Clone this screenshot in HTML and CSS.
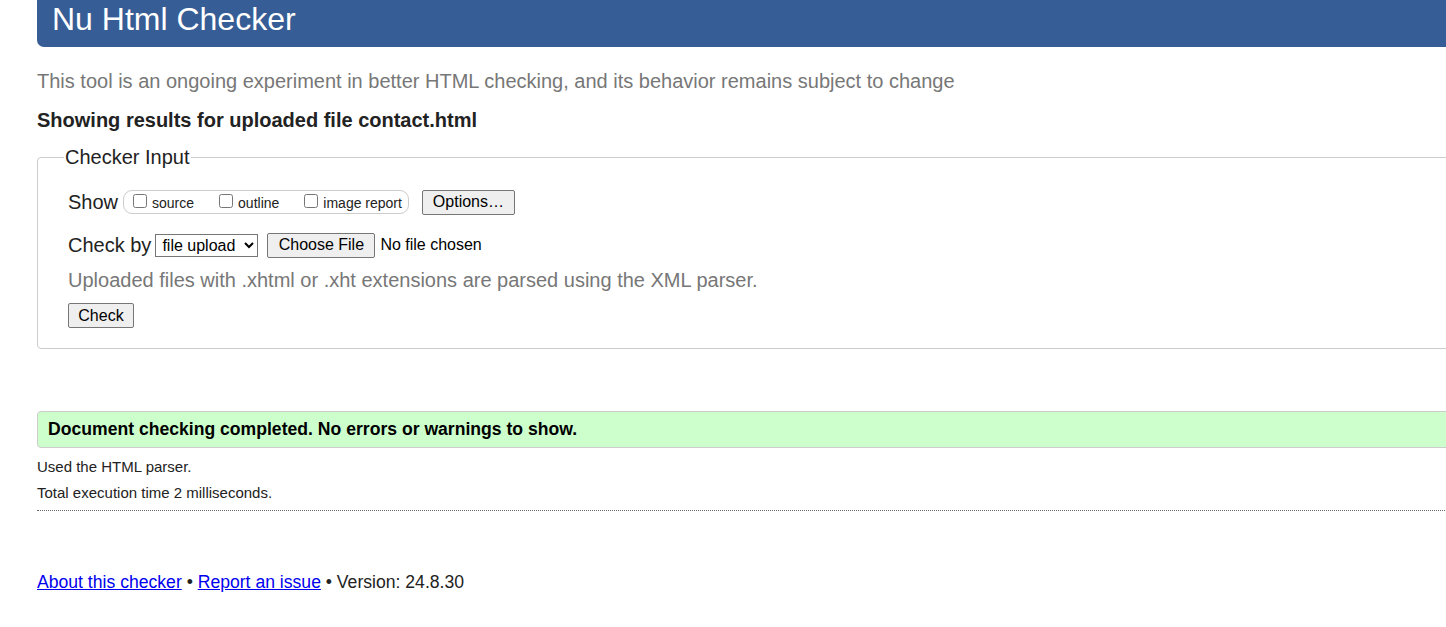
FILE: index.html
```html
<!DOCTYPE html>
<html lang="en">
<head>
<meta charset="utf-8">
<title>Showing results for contact.html - Nu Html Checker</title>
<link rel="stylesheet" href="styles.css">
</head>
<body>
<div class="page">
  <header class="masthead"><h1>Nu Html Checker</h1></header>
  <p class="intro">This tool is an ongoing experiment in better HTML checking, and its behavior remains subject to change</p>
  <p class="results-for">Showing results for uploaded file contact.html</p>
  <form class="checker-form">
    <fieldset class="checker-input">
      <legend>Checker Input</legend>
      <div class="row row-show">
        <span class="label">Show</span>
        <span class="show-group">
          <label class="opt"><input type="checkbox"><span>source</span></label>
          <label class="opt"><input type="checkbox"><span>outline</span></label>
          <label class="opt"><input type="checkbox"><span>image report</span></label>
        </span>
        <button type="button" class="btn btn-options">Options…</button>
      </div>
      <div class="row row-check">
        <span class="label">Check by</span>
        <select class="docselect"><option>file upload</option></select>
        <span class="file-pick">
          <button type="button" class="btn btn-file">Choose File</button>
          <span class="nofile">No file chosen</span>
        </span>
      </div>
      <p class="hint">Uploaded files with .xhtml or .xht extensions are parsed using the XML parser.</p>
      <div class="row row-submit">
        <button type="button" class="btn btn-check">Check</button>
      </div>
    </fieldset>
  </form>
  <div class="success">Document checking completed. No errors or warnings to show.</div>
  <p class="details">Used the HTML parser.</p>
  <p class="details">Total execution time 2 milliseconds.</p>
  <hr class="sep">
  <p class="footer"><a href="#">About this checker</a> • <a href="#">Report an issue</a> • Version: 24.8.30</p>
</div>
</body>
</html>
```
FILE: styles.css
```css
html, body {
  margin: 0;
  padding: 0;
  overflow: hidden;
  background: #fff;
}
body {
  font-family: "Liberation Sans", Arial, sans-serif;
  color: #222;
}
.page {
  width: 1440px;
  padding-left: 37px;
}
.masthead {
  background: #365d95;
  height: 47px;
  border-bottom-left-radius: 7px;
  margin-right: -40px;
}
.masthead h1 {
  margin: 0;
  padding: 1px 0 0 15px;
  font-size: 32px;
  font-weight: normal;
  line-height: 36px;
  color: #fff;
}
.intro {
  margin: 22px 0 0;
  font-size: 20px;
  line-height: 24px;
  color: #777;
}
.results-for {
  margin: 15px 0 0;
  font-size: 20px;
  line-height: 24px;
  font-weight: bold;
  color: #222;
}
.checker-form {
  margin: 13px 0 0;
}
.checker-input {
  margin: 0 -40px 0 0;
  padding: 20px 30px 20px 30px;
  border: 1px solid #ccc;
  border-radius: 4px;
  display: flex;
  flex-direction: column;
}
.checker-input legend {
  font-size: 20px;
  line-height: 24px;
  padding: 0 1px;
  margin-left: -4px;
  color: #222;
}
.row {
  display: flex;
  align-items: center;
}
.label {
  font-size: 20px;
  line-height: 24px;
}
.row-show {
  height: 26px;
}
.row-check {
  margin-top: 17px;
  height: 26px;
}
.show-group {
  margin-left: 5px;
  height: 22px;
  padding: 0 6px 0 9px;
  border: 1px solid #ccc;
  border-radius: 9px;
  display: flex;
  align-items: center;
  gap: 25px;
}
.opt {
  font-size: 14px;
  display: flex;
  align-items: center;
  position: relative;
  top: 1px;
}
.opt input {
  margin: 0 5px 4px 0;
  width: 14px;
  height: 14px;
}
.btn {
  font-family: "Liberation Sans", Arial, sans-serif;
  font-size: 16px;
  color: #000;
  background: #efefef;
  border: 1px solid #767676;
  border-radius: 2px;
  padding: 0 8px;
  height: 25px;
}
.btn-options {
  margin-left: 13px;
  width: 93px;
}
.docselect {
  margin-left: 4px;
  font-family: "Liberation Sans", Arial, sans-serif;
  font-size: 16px;
  height: 23px;
  width: 103px;
  color: #000;
  border: 1px solid #767676;
  border-radius: 0;
  background: #fff;
  padding: 0 0 0 2px;
}
.file-pick {
  margin-left: 9px;
  display: flex;
  align-items: center;
}
.btn-file {
  width: 108px;
}
.nofile {
  margin-left: 5px;
  font-size: 16px;
  color: #000;
}
.hint {
  margin: 10px 0 0;
  font-size: 20px;
  line-height: 24px;
  color: #777;
}
.row-submit {
  margin-top: 11px;
}
.btn-check {
  width: 66px;
  padding: 0;
}
.success {
  margin: 62px -40px 0 0;
  height: 35px;
  line-height: 35px;
  padding-left: 10px;
  background: #ccffcc;
  border: 1px solid #ccc;
  border-radius: 4px;
  font-size: 17.6px;
  font-weight: bold;
  color: #000;
}
.details {
  margin: 10px 0 0;
  font-size: 15px;
  line-height: 18px;
  color: #222;
}
.details + .details {
  margin-top: 8px;
}
.sep {
  margin: 8px -40px 0 0;
  border: 0;
  border-top: 1px dotted #666;
  height: 0;
}
.footer {
  margin: 60px 0 0;
  font-size: 17.6px;
  line-height: 22px;
  color: #222;
}
.footer a {
  color: #00e;
}
```
